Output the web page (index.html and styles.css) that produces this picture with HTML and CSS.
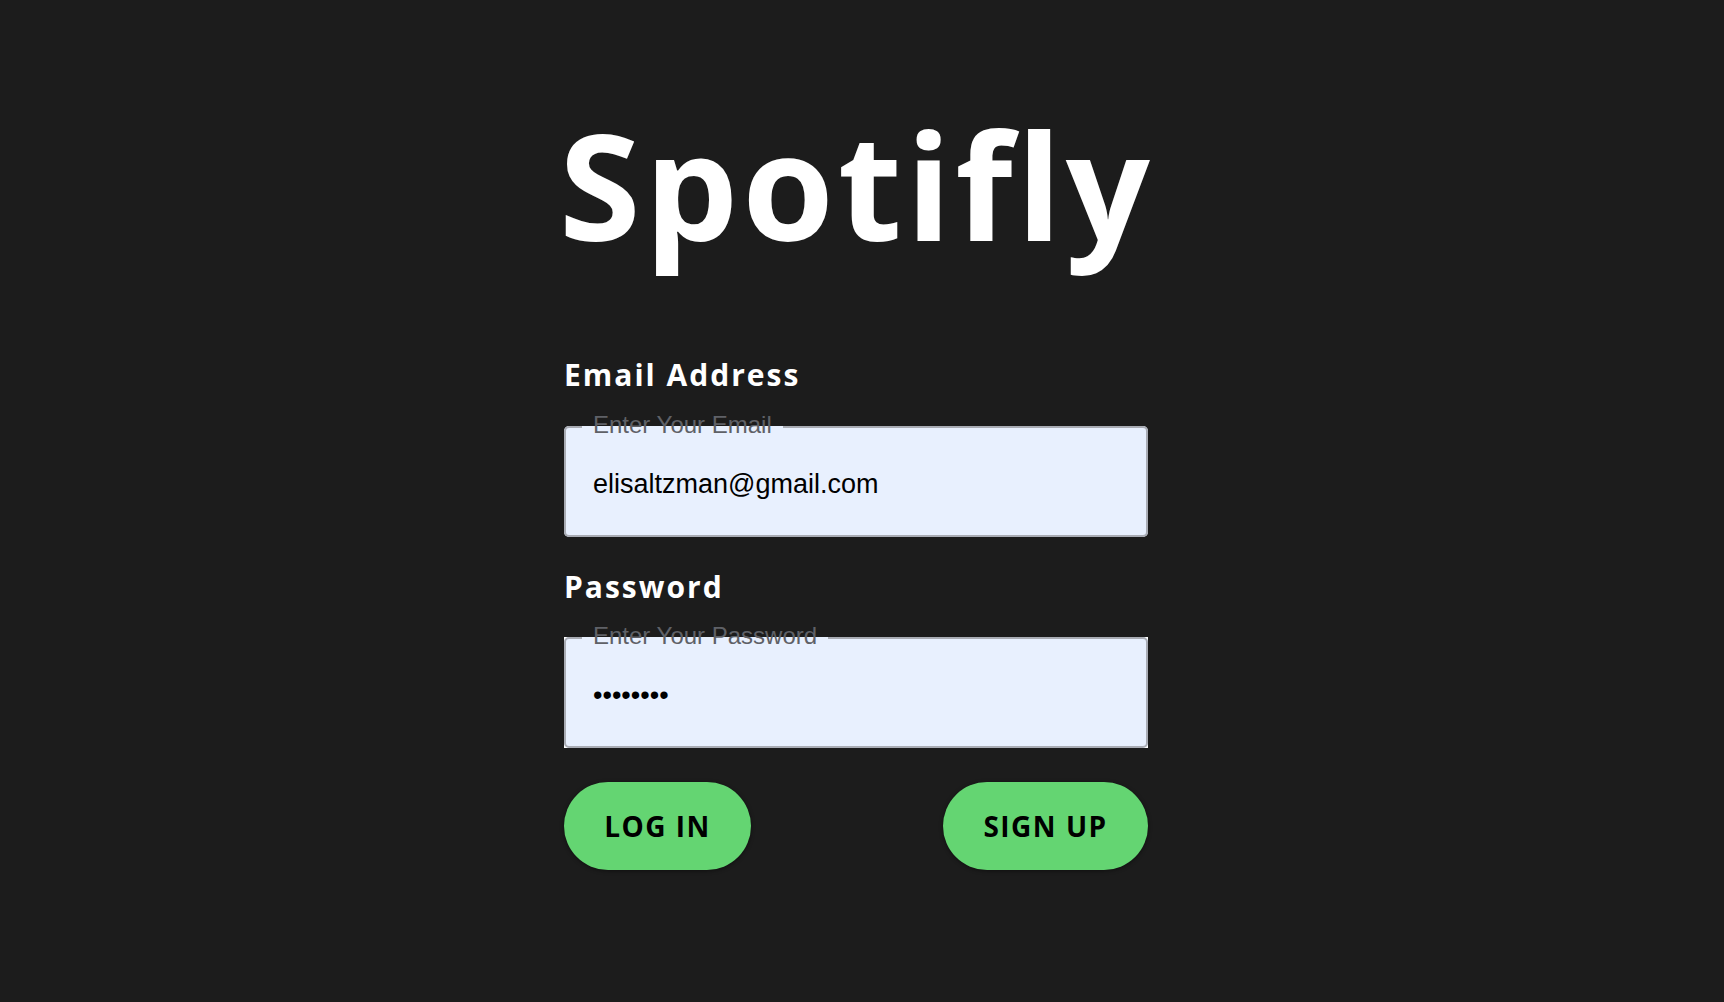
FILE: index.html
```html
<!DOCTYPE html>
<html lang="en">
<head>
<meta charset="utf-8">
<title>Spotifly</title>
<link rel="stylesheet" href="styles.css">
</head>
<body>
<main class="page">
  <div class="login">
    <h1 class="brand">Spotifly</h1>
    <form class="form">
      <label class="label" for="email">Email Address</label>
      <div class="field-wrap">
        <fieldset class="field">
          <legend class="legend">Enter Your Email</legend>
          <input class="input" id="email" type="email" value="elisaltzman@gmail.com">
        </fieldset>
      </div>
      <label class="label label--second" for="password">Password</label>
      <div class="field-wrap field-wrap--second field-wrap--backed">
        <fieldset class="field">
          <legend class="legend">Enter Your Password</legend>
          <input class="input" id="password" type="password" value="password">
        </fieldset>
      </div>
      <div class="actions">
        <button type="button" class="btn btn--login">LOG IN</button>
        <button type="button" class="btn btn--signup">SIGN UP</button>
      </div>
    </form>
  </div>
</main>
</body>
</html>
```

FILE: styles.css
```css
html, body {
  margin: 0;
  padding: 0;
  background: #1c1c1c;
}
body {
  font-family: "Open Sans", "Liberation Sans", sans-serif;
  color: #fff;
  min-height: 1002px;
}
.page {
  padding-left: 564px;
  padding-top: 110px;
}
.login {
  width: 584px;
}
.brand {
  margin: 0 0 0 -5px;
  font-family: "Open Sans", sans-serif;
  font-weight: 700;
  font-size: 148px;
  line-height: 148px;
  letter-spacing: 4px;
  height: 148px;
}
.form {
  display: flex;
  flex-direction: column;
  margin-top: 100px;
}
.label {
  font-family: "Open Sans", sans-serif;
  font-weight: 700;
  font-size: 30px;
  line-height: 34px;
  letter-spacing: 2px;
  color: #fff;
}
.label--second {
  margin-top: 33px;
}
.field-wrap {
  margin-top: 21px;
}
.field-wrap--second {
  margin-top: 20px;
}
.field-wrap--backed {
  background: linear-gradient(#ffffff, #ffffff) 0 13px / 100% calc(100% - 13px) no-repeat;
}
.field {
  margin: 0;
  padding: 0;
  border: 2px solid #a9acb4;
  border-radius: 5px;
  background: #e8f0fe;
  min-inline-size: 0;
}
.legend {
  margin-left: 16px;
  padding: 0 11px 4px;
  font-family: "Liberation Sans", Arial, sans-serif;
  font-size: 24px;
  line-height: 24px;
  color: #5f6167;
}
.input {
  display: block;
  box-sizing: border-box;
  width: 100%;
  height: 94px;
  margin: 0;
  padding: 0 0 8px 27px;
  border: none;
  outline: none;
  background: transparent;
  font-family: "Liberation Sans", Arial, sans-serif;
  font-size: 27px;
  color: #000;
}
.actions {
  display: flex;
  justify-content: space-between;
  margin-top: 34px;
}
.btn {
  height: 88px;
  padding: 0;
  border: none;
  border-radius: 44px;
  background: #64d572;
  color: #000;
  font-family: "Open Sans", sans-serif;
  font-weight: 700;
  font-size: 28px;
  letter-spacing: 1.5px;
  box-shadow: 0 1px 4px rgba(0, 0, 0, 0.45);
  cursor: pointer;
}
.btn--login {
  width: 187px;
}
.btn--signup {
  width: 205px;
}
```
